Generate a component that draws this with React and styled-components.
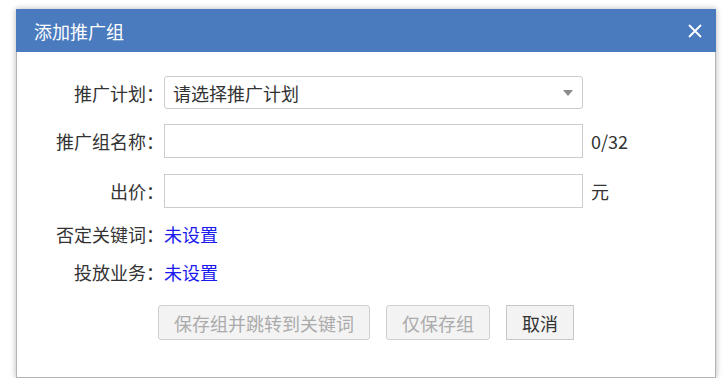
import React from "react";
import styled, { createGlobalStyle } from "styled-components";

const GlobalStyle = createGlobalStyle`
  html, body {
    margin: 0;
    padding: 0;
    background: #ffffff;
  }
  body {
    font-family: "Noto Sans CJK SC", "Microsoft YaHei", sans-serif;
    color: #333333;
  }
`;

const Page = styled.div`
  padding: 9px 0 0 16px;
`;

const Dialog = styled.div`
  width: 700px;
  height: 369px;
  box-sizing: border-box;
  background: #ffffff;
  border: 1px solid #b4b4b4;
  border-top: none;
  box-shadow: 0 0 6px rgba(0, 0, 0, 0.3);
  display: flex;
  flex-direction: column;
`;

const TitleBar = styled.div`
  height: 43px;
  background: #4a7bbf;
  margin: 0 -1px;
  display: flex;
  align-items: center;
  justify-content: space-between;
  padding: 0 14px 0 18px;
  color: #ffffff;
`;

const Title = styled.span`
  font-size: 18px;
  line-height: 1;
`;

const CloseButton = styled.button`
  border: none;
  background: none;
  padding: 0;
  width: 14px;
  height: 14px;
  display: flex;
  cursor: pointer;
`;

const Form = styled.div`
  display: flex;
  flex-direction: column;
`;

const Row = styled.div`
  display: flex;
  align-items: center;
  height: ${(p) => p.$h}px;
  margin-top: ${(p) => p.$top}px;
  font-size: 18px;
  line-height: 1;
`;

const Label = styled.span`
  width: 147px;
  text-align: right;
  flex-shrink: 0;
  color: #333333;
`;

const SelectBox = styled.div`
  width: 419px;
  height: 100%;
  box-sizing: border-box;
  border: 1px solid #cccccc;
  border-radius: 3px;
  display: flex;
  align-items: center;
  justify-content: space-between;
  padding: 0 9px 0 8px;
  color: #333333;
`;

const Caret = styled.span`
  width: 0;
  height: 0;
  border-left: 5px solid transparent;
  border-right: 5px solid transparent;
  border-top: 6px solid #8a8a8a;
`;

const TextInput = styled.input`
  width: 419px;
  height: 100%;
  box-sizing: border-box;
  border: 1px solid #cccccc;
  border-radius: 0;
  padding: 0 8px;
  font: inherit;
  color: #333333;
  outline: none;
`;

const Suffix = styled.span`
  margin-left: 8px;
  color: #333333;
`;

const Link = styled.a`
  color: #1a1aee;
  text-decoration: none;
  cursor: pointer;
`;

const Actions = styled.div`
  display: flex;
  justify-content: center;
  gap: 16px;
  margin-top: 14px;
`;

const Button = styled.button`
  height: 35px;
  padding: 0 15px;
  font-family: inherit;
  font-size: 18px;
  line-height: 1;
  background: #f3f3f3;
  border: 1px solid ${(p) => (p.disabled ? "#cfcfcf" : "#c8c8c8")};
  border-radius: ${(p) => (p.disabled ? "3px" : "0")};
  color: ${(p) => (p.disabled ? "#ababab" : "#333333")};
  cursor: ${(p) => (p.disabled ? "default" : "pointer")};
`;

const App = () => {
  return (
    <>
      <GlobalStyle />
      <Page>
        <Dialog>
          <TitleBar>
            <Title>添加推广组</Title>
            <CloseButton aria-label="关闭">
              <svg width="14" height="14" viewBox="0 0 14 14">
                <path
                  d="M1 1 L13 13 M13 1 L1 13"
                  stroke="#ffffff"
                  strokeWidth="1.8"
                  fill="none"
                />
              </svg>
            </CloseButton>
          </TitleBar>
          <Form>
            <Row $h={33} $top={24}>
              <Label>推广计划：</Label>
              <SelectBox>
                <span>请选择推广计划</span>
                <Caret />
              </SelectBox>
            </Row>
            <Row $h={34} $top={15}>
              <Label>推广组名称：</Label>
              <TextInput />
              <Suffix>0/32</Suffix>
            </Row>
            <Row $h={34} $top={16}>
              <Label>出价：</Label>
              <TextInput />
              <Suffix>元</Suffix>
            </Row>
            <Row $h={36} $top={8}>
              <Label>否定关键词：</Label>
              <Link>未设置</Link>
            </Row>
            <Row $h={38} $top={1}>
              <Label>投放业务：</Label>
              <Link>未设置</Link>
            </Row>
            <Actions>
              <Button disabled>保存组并跳转到关键词</Button>
              <Button disabled>仅保存组</Button>
              <Button>取消</Button>
            </Actions>
          </Form>
        </Dialog>
      </Page>
    </>
  );
};

export default App;
